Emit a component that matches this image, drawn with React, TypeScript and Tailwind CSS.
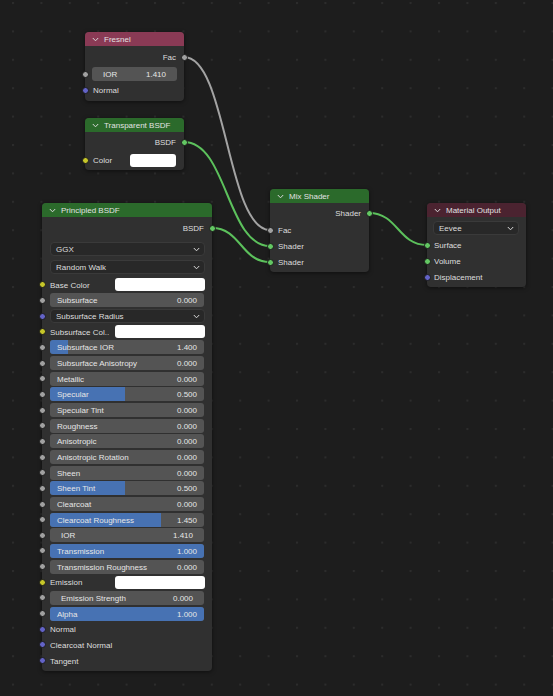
import React from "react";

const SOCK: Record<string, string> = {
  gray: "bg-[#a1a1a1]",
  yellow: "bg-[#c7c729]",
  purple: "bg-[#6363c7]",
  green: "bg-[#63c763]",
};

function Socket({ color, side }: { color: string; side: "l" | "r" }) {
  return (
    <div
      className={
        "absolute top-[calc(50%-3.5px)] w-[7px] h-[7px] rounded-full border border-[#1a1a1a] " +
        SOCK[color] +
        (side === "l" ? " left-[-3.5px]" : " right-[-3.5px]")
      }
    />
  );
}

function Chevron({ cls = "" }: { cls?: string }) {
  return (
    <svg width="7" height="5" viewBox="0 0 7 5" className={cls}>
      <path d="M0.8 1 L3.5 3.8 L6.2 1" fill="none" stroke="#d8d8d8" strokeWidth="1" />
    </svg>
  );
}

function Header({ title, cls }: { title: string; cls: string }) {
  return (
    <div className={"h-[14px] flex items-center pl-[7px] gap-[5px] rounded-t-[4px] " + cls}>
      <Chevron />
      <span className="text-[#e2e2e2]">{title}</span>
    </div>
  );
}

function OutRow({ label, color, h = "h-[16px]" }: { label: string; color: string; h?: string }) {
  return (
    <div className={"relative flex items-center justify-end pr-[8px] " + h}>
      <span>{label}</span>
      <Socket color={color} side="r" />
    </div>
  );
}

function InRow({ label, color, h = "h-[16px]", pl = "pl-[8px]" }: { label: string; color: string; h?: string; pl?: string }) {
  return (
    <div className={"relative flex items-center " + pl + " " + h}>
      <span>{label}</span>
      <Socket color={color} side="l" />
    </div>
  );
}

function Dropdown({ label, cls = "" }: { label: string; cls?: string }) {
  return (
    <div className={"h-[14px] rounded-[4px] bg-[#282828] border border-[#3a3a3a] flex items-center justify-between pl-[5px] pr-[4px] " + cls}>
      <span>{label}</span>
      <Chevron />
    </div>
  );
}

const FILL: Record<string, string> = {
  "0": "w-0",
  "12": "w-[12%]",
  "49": "w-[49%]",
  "72": "w-[72%]",
  "100": "w-full",
};

function Slider({ label, value, fill = "0", color = "gray", num = false }: { label: string; value: string; fill?: string; color?: string; num?: boolean }) {
  return (
    <div className="relative h-[15.67px] flex items-center px-[8px]">
      <Socket color={color} side="l" />
      <div className="relative h-[14px] w-full rounded-[3px] bg-[#545454] overflow-hidden">
        <div className={"absolute left-0 top-0 bottom-0 bg-[#4772b3] " + FILL[fill]} />
        <div className={"relative h-full flex items-center justify-between text-[#e6e6e6] " + (num ? "pl-[11px] pr-[11px]" : "pl-[7px] pr-[7px]")}>
          <span>{label}</span>
          <span>{value}</span>
        </div>
      </div>
    </div>
  );
}

function ColorRow({ label, swatch = "w-[90px]" }: { label: string; swatch?: string }) {
  return (
    <div className="relative h-[15.67px] flex items-center justify-between pl-[8px] pr-[7px]">
      <Socket color="yellow" side="l" />
      <span>{label}</span>
      <div className={"h-[13px] rounded-[3px] bg-white " + swatch} />
    </div>
  );
}

function LabelRow({ label }: { label: string }) {
  return (
    <div className="relative h-[15.67px] flex items-center pl-[8px]">
      <Socket color="purple" side="l" />
      <span>{label}</span>
    </div>
  );
}

export default function App() {
  return (
    <div
      className="relative w-[553px] h-[696px] overflow-hidden bg-[#1d1d1d] text-[8px] leading-none text-[#dedede] [&_span]:relative [&_span]:top-[1px]"
      style={{ fontFamily: '"Liberation Sans", Arial, sans-serif' }}
    >
      <svg className="absolute inset-0" width="553" height="696">
        <defs>
          <pattern id="grid" x="12" y="2" width="28.4" height="28.4" patternUnits="userSpaceOnUse">
            <rect x="0" y="0" width="2" height="2" fill="#2c2c2c" />
          </pattern>
        </defs>
        <rect x="0" y="0" width="553" height="696" fill="url(#grid)" />
        <path d="M184 57 C227 57 227 230 270 230" fill="none" stroke="#a3a3a3" strokeWidth="2" />
        <path d="M184 142 C227 142 227 246 270 246" fill="none" stroke="#5cc15c" strokeWidth="2" />
        <path d="M212 228 C241 228 241 262 270 262" fill="none" stroke="#5cc15c" strokeWidth="2" />
        <path d="M369 213 C398 213 398 245 427 245" fill="none" stroke="#5cc15c" strokeWidth="2" />
      </svg>

      {/* Fresnel */}
      <div className="absolute left-[85px] top-[32px] w-[99px] rounded-[4px] bg-[#303030] shadow-[0_1px_4px_rgba(0,0,0,0.5)] pb-[3px]">
        <Header title="Fresnel" cls="bg-[#8a3a55]" />
        <div className="pt-[3px]">
          <OutRow label="Fac" color="gray" />
          <div className="relative h-[16px] mt-[1px] flex items-center px-[7px]">
            <Socket color="gray" side="l" />
            <div className="h-[14px] w-full rounded-[3px] bg-[#545454] flex items-center justify-between px-[11px] text-[#e6e6e6]">
              <span>IOR</span>
              <span>1.410</span>
            </div>
          </div>
          <InRow label="Normal" color="purple" />
        </div>
      </div>

      {/* Transparent BSDF */}
      <div className="absolute left-[85px] top-[118px] w-[99px] rounded-[4px] bg-[#303030] shadow-[0_1px_4px_rgba(0,0,0,0.5)] pb-[2px]">
        <Header title="Transparent BSDF" cls="bg-[#2b6a2b]" />
        <div className="pt-[2px]">
          <OutRow label="BSDF" color="green" />
          <div className="relative h-[16px] mt-[2px] flex items-center justify-between pl-[8px] pr-[8px]">
            <Socket color="yellow" side="l" />
            <span>Color</span>
            <div className="h-[13px] w-[46px] rounded-[3px] bg-white" />
          </div>
        </div>
      </div>

      {/* Principled BSDF */}
      <div className="absolute left-[42px] top-[203px] w-[170px] rounded-[4px] bg-[#303030] shadow-[0_1px_4px_rgba(0,0,0,0.5)] pb-[3px]">
        <Header title="Principled BSDF" cls="bg-[#2b6a2b]" />
        <div className="pt-[3px]">
          <OutRow label="BSDF" color="green" />
          <div className="h-[4px]" />
          <div className="h-[18px] flex items-center px-[8px] pr-[7px]">
            <Dropdown label="GGX" cls="w-full" />
          </div>
          <div className="h-[18px] flex items-center px-[8px] pr-[7px]">
            <Dropdown label="Random Walk" cls="w-full" />
          </div>
          <div className="h-[1px]" />
          <ColorRow label="Base Color" />
          <Slider label="Subsurface" value="0.000" />
          <div className="relative h-[15.67px] flex items-center px-[8px] pr-[7px]">
            <Socket color="purple" side="l" />
            <Dropdown label="Subsurface Radius" cls="w-full" />
          </div>
          <ColorRow label="Subsurface Col.." />
          <Slider label="Subsurface IOR" value="1.400" fill="12" />
          <Slider label="Subsurface Anisotropy" value="0.000" />
          <Slider label="Metallic" value="0.000" />
          <Slider label="Specular" value="0.500" fill="49" />
          <Slider label="Specular Tint" value="0.000" />
          <Slider label="Roughness" value="0.000" />
          <Slider label="Anisotropic" value="0.000" />
          <Slider label="Anisotropic Rotation" value="0.000" />
          <Slider label="Sheen" value="0.000" />
          <Slider label="Sheen Tint" value="0.500" fill="49" />
          <Slider label="Clearcoat" value="0.000" />
          <Slider label="Clearcoat Roughness" value="1.450" fill="72" />
          <Slider label="IOR" value="1.410" num />
          <Slider label="Transmission" value="1.000" fill="100" />
          <Slider label="Transmission Roughness" value="0.000" />
          <ColorRow label="Emission" />
          <Slider label="Emission Strength" value="0.000" num />
          <Slider label="Alpha" value="1.000" fill="100" />
          <LabelRow label="Normal" />
          <LabelRow label="Clearcoat Normal" />
          <LabelRow label="Tangent" />
        </div>
      </div>

      {/* Mix Shader */}
      <div className="absolute left-[270px] top-[189px] w-[99px] rounded-[4px] bg-[#303030] shadow-[0_1px_4px_rgba(0,0,0,0.5)] pb-[2px]">
        <Header title="Mix Shader" cls="bg-[#2b6a2b]" />
        <div className="pt-[2px]">
          <OutRow label="Shader" color="green" />
          <div className="h-[1px]" />
          <InRow label="Fac" color="gray" />
          <InRow label="Shader" color="green" />
          <InRow label="Shader" color="green" />
        </div>
      </div>

      {/* Material Output */}
      <div className="absolute left-[427px] top-[203px] w-[99px] rounded-[4px] bg-[#303030] shadow-[0_1px_4px_rgba(0,0,0,0.5)] pb-[2px]">
        <Header title="Material Output" cls="bg-[#4b2330]" />
        <div className="pt-[2px]">
          <div className="h-[18px] flex items-center pl-[6px] pr-[7px]">
            <Dropdown label="Eevee" cls="w-full" />
          </div>
          <InRow label="Surface" color="green" pl="pl-[7px]" />
          <InRow label="Volume" color="green" pl="pl-[7px]" />
          <InRow label="Displacement" color="purple" pl="pl-[7px]" />
        </div>
      </div>
    </div>
  );
}
